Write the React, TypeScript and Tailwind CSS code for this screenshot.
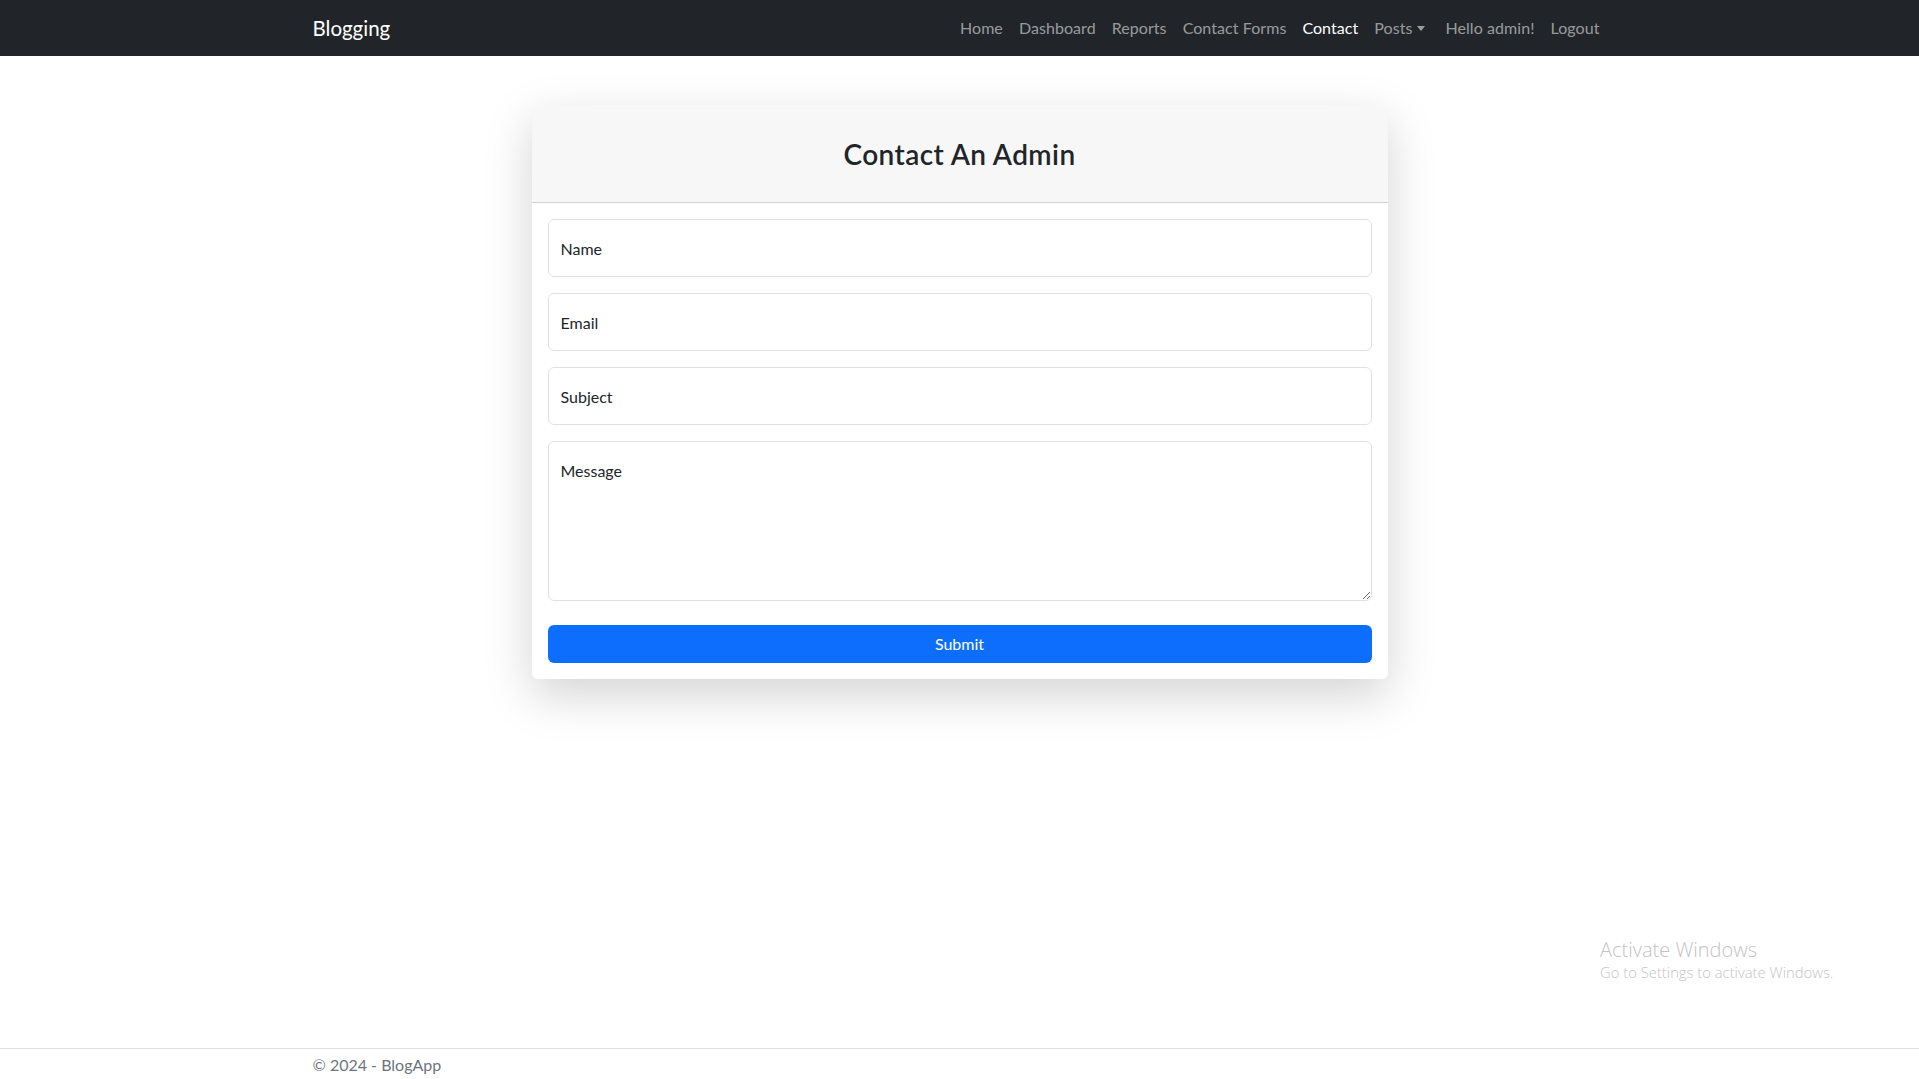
import React from "react";

const navLinks = [
  { label: "Home" },
  { label: "Dashboard" },
  { label: "Reports" },
  { label: "Contact Forms" },
  { label: "Contact", active: true },
];

function Navbar() {
  return (
    <nav className="bg-[#212529] h-[56px]">
      <div className="w-[1320px] mx-auto px-3 h-full flex items-center justify-between">
        <a className="text-white text-[20.5px] leading-[30px] pl-px">Blogging</a>
        <ul className="flex items-center">
          {navLinks.map((l) => (
            <li key={l.label}>
              <a
                className={
                  "block px-2 py-2 text-[16px] leading-6 tracking-[0.004em] " +
                  (l.active ? "text-white" : "text-[#ffffff8c]")
                }
              >
                {l.label}
              </a>
            </li>
          ))}
          <li>
            <a className="flex items-center px-2 py-2 text-[16px] leading-6 tracking-[0.004em] text-[#ffffff8c]">
              Posts
              <span className="ml-[5px] w-0 h-0 border-x-[4px] border-x-transparent border-t-[5px] border-t-[#ffffff8c]" />
            </a>
          </li>
          <li className="ml-1">
            <a className="block px-2 py-2 text-[16px] leading-6 tracking-[0.004em] text-[#ffffff8c]">Hello admin!</a>
          </li>
          <li>
            <a className="block px-2 py-2 text-[16px] leading-6 tracking-[0.004em] text-[#ffffff8c]">Logout</a>
          </li>
        </ul>
      </div>
    </nav>
  );
}

function ContactCard() {
  const field =
    "w-full h-[58px] px-3 border border-[#dee2e6] rounded-[6px] text-[16px] text-[#212529] placeholder:text-[#212529] outline-none bg-white";
  return (
    <div className="w-[856px] mx-auto mt-[49px] bg-white rounded-[6px] shadow-[0_16px_48px_rgba(0,0,0,0.175)]">
      <div className="h-[98px] flex items-center justify-center bg-[#f7f7f7] border-b border-[#d3d3d3] rounded-t-[6px]">
        <h3 className="text-[28px] font-semibold tracking-[0.015em] text-[#212529] leading-[34px]">Contact An Admin</h3>
      </div>
      <form className="p-4 flex flex-col" onSubmit={(e) => e.preventDefault()}>
        <input className={field + " mb-4"} placeholder="Name" />
        <input className={field + " mb-4"} placeholder="Email" />
        <input className={field + " mb-4"} placeholder="Subject" />
        <textarea
          className="w-full h-[160px] px-3 pt-[17px] border border-[#dee2e6] rounded-[6px] text-[16px] leading-6 text-[#212529] placeholder:text-[#212529] outline-none mb-6"
          placeholder="Message"
        />
        <button className="w-full h-[38px] bg-[#0d6efd] text-white text-[16px] rounded-[6px]">Submit</button>
      </form>
    </div>
  );
}

export default function App() {
  return (
    <div className="relative h-[1079px] flex flex-col bg-white font-['Lato','Open_Sans',sans-serif] overflow-hidden">
      <Navbar />
      <main className="flex-1">
        <ContactCard />
      </main>
      <footer className="h-[31px] border-t border-[#dee2e6]">
        <div className="w-[1320px] mx-auto px-3 pt-[1px] leading-[30px] text-[16px] text-[#6c757d] pl-[13px]">
          © 2024 - BlogApp
        </div>
      </footer>
      <div className="absolute left-[1600px] top-[937px] text-[#c4c4c4] font-['Open_Sans',sans-serif] font-light pointer-events-none">
        <div className="text-[20px] leading-[25px]">Activate Windows</div>
        <div className="text-[14.8px] leading-[20px]">Go to Settings to activate Windows.</div>
      </div>
    </div>
  );
}
